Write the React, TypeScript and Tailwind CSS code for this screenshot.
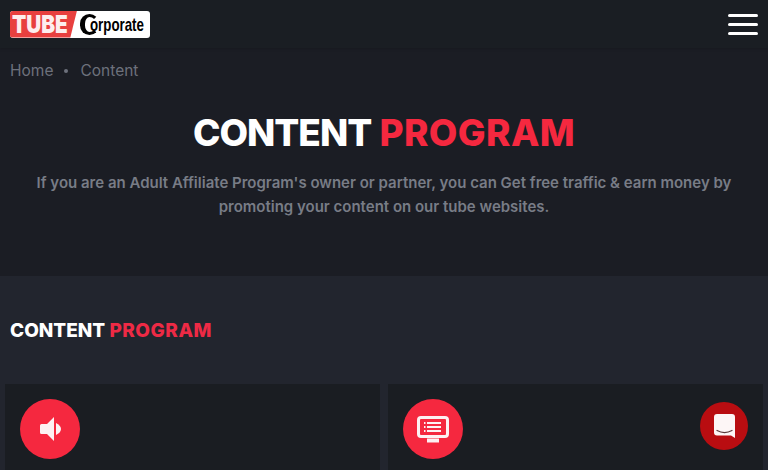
import React from "react";

const Logo = () => (
  <div className="relative ml-[10px] h-[27px] w-[140px] rounded-[3px] bg-white">
    <div className="h-full w-[67px] rounded-l-[3px] bg-[#e8403f] [clip-path:polygon(0_0,100%_0,90%_100%,0_100%)]" />
    <span className="absolute left-[2px] top-[1px] origin-left scale-x-[0.83] text-[25px] font-black leading-[25px] text-[#fdeeee]">
      TUBE
    </span>
    <span className="absolute left-[70px] top-[3px] h-[21px] w-[19px] rounded-full border-[3px] border-l-[5px] border-black border-r-transparent" />
    <span className="absolute left-[80px] top-[2px] origin-left scale-x-[0.7] text-[19px] font-bold leading-[23px] text-black [font-family:'Liberation_Sans',sans-serif]">
      orporate
    </span>
  </div>
);

const SpeakerIcon = () => (
  <svg width="21" height="24" viewBox="0 0 21 24" fill="#fdf1f3">
    <path d="M1.500 7H7l7-7v24l-7-7H1.500A1.500 1.500 0 0 1 0 15.500v-7A1.500 1.500 0 0 1 1.500 7z" />
    <path d="M16 6c3 1.500 5 3.500 5 6s-2 4.500-5 6z" />
  </svg>
);

const ListScreenIcon = () => (
  <svg width="32" height="27" viewBox="0 0 32 27" fill="none" stroke="#fdf1f3">
    <rect x="1.500" y="1.500" width="29" height="19" rx="2.500" strokeWidth="3" />
    <path d="M7 7h1.500M10 7h14M7 11h1.500M10 11h14M7 15h1.500M10 15h14" strokeWidth="2" />
    <path d="M10 24.500h12" strokeWidth="4" />
  </svg>
);

const ChatIcon = () => (
  <svg width="21" height="24" viewBox="0 0 21 24">
    <path d="M3 0h15a3 3 0 0 1 3 3v21l-4-2.500H3a3 3 0 0 1-3-3V3a3 3 0 0 1 3-3z" fill="#fdf6f6" />
    <path d="M3 16.500c4.500 2.500 10.500 2.500 15 0" fill="none" stroke="#5a3a3a" strokeWidth="1.200" strokeLinecap="round" />
  </svg>
);

const Card = ({ children }: { children: React.ReactNode }) => (
  <div className="h-[120px] bg-[#1a1d22] pl-[15px] pt-[15px]">
    <div className="flex size-[60px] items-center justify-center rounded-full bg-[#f5283f]">{children}</div>
  </div>
);

export default function App() {
  return (
    <div className="relative h-[470px] w-[768px] overflow-hidden bg-[#1b1d24] [font-family:Inter,sans-serif]">
      <header className="flex h-[48px] items-center justify-between bg-[#1a1e23] pr-[10px] shadow-[0_1px_3px_rgba(0,0,0,0.15)]">
        <Logo />
        <div className="flex w-[30px] flex-col gap-[6px]">
          <span className="h-[3px] rounded-full bg-white" />
          <span className="h-[3px] rounded-full bg-white" />
          <span className="h-[3px] rounded-full bg-white" />
        </div>
      </header>

      <nav className="flex h-[44px] items-center pl-[10px] pt-[1px] text-[15.500px] text-[#6d717c]">
        <span>Home</span>
        <span className="ml-[11px] mr-[12px] size-[4px] rounded-full bg-[#6d717c]" />
        <span>Content</span>
      </nav>

      <section className="flex h-[184px] flex-col items-center">
        <h1 className="mt-[19px] text-[37px] font-extrabold leading-[44px] text-white">
          <span className="tracking-[-1px]">CONTENT</span> <span className="tracking-[0.4px] text-[#f5283f]">PROGRAM</span>
        </h1>
        <p className="mt-[16px] w-[720px] text-center text-[15px] font-semibold leading-[24px] text-[#787c86]">
          If you are an Adult Affiliate Program's owner or partner, you can Get free traffic &amp; earn money by promoting your content on our tube websites.
        </p>
      </section>

      <section className="h-[194px] bg-[#22252e]">
        <h2 className="pl-[10px] pt-[43px] text-[19px] font-extrabold leading-[24px] text-white">
          CONTENT <span className="tracking-[0.5px] text-[#ee2a45]">PROGRAM</span>
        </h2>
        <div className="mt-[41px] grid grid-cols-2 gap-[8px] px-[5px]">
          <Card>
            <SpeakerIcon />
          </Card>
          <Card>
            <ListScreenIcon />
          </Card>
        </div>
      </section>

      <button className="absolute left-[700px] top-[402px] flex size-[48px] items-center justify-center rounded-full bg-[#b90d11]">
        <ChatIcon />
      </button>
    </div>
  );
}
